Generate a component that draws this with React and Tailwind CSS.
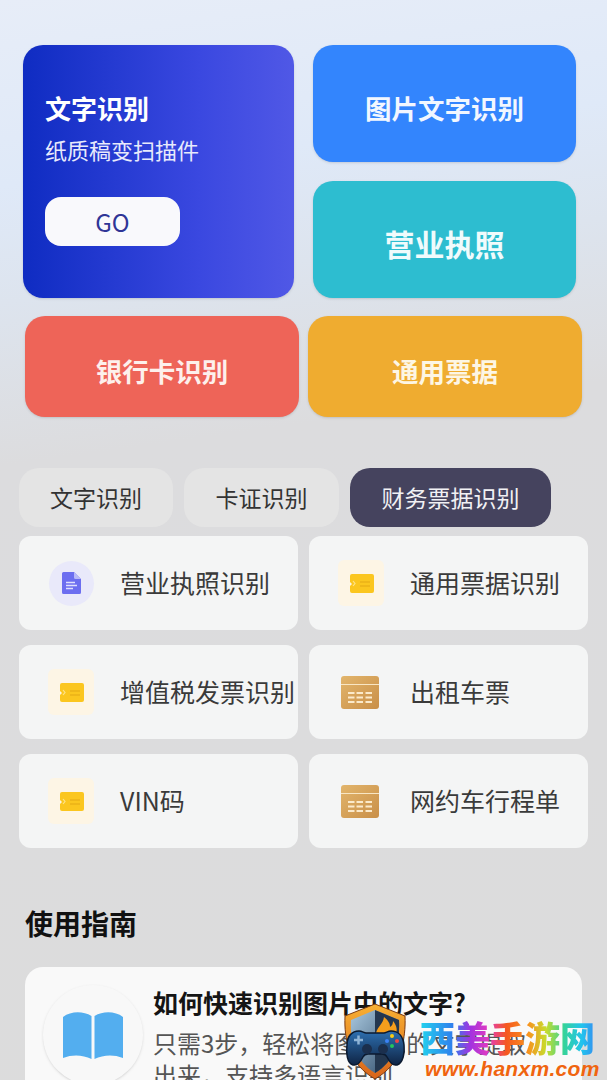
const rows = [
  [
    { label: "营业执照识别", icon: "doc" },
    { label: "通用票据识别", icon: "folder" },
  ],
  [
    { label: "增值税发票识别", icon: "folder" },
    { label: "出租车票", icon: "table" },
  ],
  [
    { label: "VIN码", icon: "folder" },
    { label: "网约车行程单", icon: "table" },
  ],
];

function DocIcon() {
  return (
    <div className="ml-[3px] flex h-[45px] w-[45px] items-center justify-center rounded-full bg-[#e9e9fa]">
      <svg viewBox="0 0 19 22" className="h-[22px] w-[19px]">
        <path d="M1.5 0H12l7 7v13.5a1.5 1.5 0 0 1-1.5 1.5h-16A1.5 1.5 0 0 1 0 20.5V1.5A1.5 1.5 0 0 1 1.5 0z" fill="#6c6ef0" />
        <path d="M12 0l7 7h-5.500A1.500 1.500 0 0 1 12 5.500z" fill="#b9baf8" />
        <path d="M4 10.500h9M4 13.500h11M4 16.500h7" stroke="#dfe0fd" strokeWidth="1.300" />
      </svg>
    </div>
  );
}

function FolderIcon() {
  return (
    <div className="ml-[3px] flex h-[46px] w-[46px] items-center justify-center rounded-md bg-[#fdf5e5]">
      <svg viewBox="0 0 25 19" className="h-[19px] w-[25px]">
        <path d="M3 0h20a2 2 0 0 1 2 2v15a2 2 0 0 1-2 2H3a2 2 0 0 1-2-2v-5l2-2-2-2V2a2 2 0 0 1 2-2z" fill="#fbc61f" />
        <path d="M11 8h10M11 12h10" stroke="#e3a815" strokeWidth="1.200" />
        <path d="M4 7l2 2.500L4 12" fill="none" stroke="#fde48a" strokeWidth="1.200" />
      </svg>
    </div>
  );
}

function TableIcon() {
  return (
    <svg viewBox="0 0 38 33" className="h-[33px] w-[38px]">
      <defs>
        <linearGradient id="tan" x1="0" y1="0" x2="1" y2="1">
          <stop offset="0" stopColor="#e2b56c" />
          <stop offset="1" stopColor="#c98f48" />
        </linearGradient>
      </defs>
      <rect width="38" height="33" rx="3" fill="url(#tan)" />
      <path d="M0 8.500h38" stroke="#f8e6c4" strokeWidth="1.200" />
      <path d="M7 17h6.500M15.500 17h6.500M24.500 17h6.500M7 21.500h6.500M15.500 21.500h6.500M24.500 21.500h6.500M7 26h6.500M15.500 26h6.500M24.500 26h6.500" stroke="#fbeacb" strokeWidth="2" />
    </svg>
  );
}

function RowIcon({ type }) {
  if (type === "doc") return <DocIcon />;
  if (type === "folder") return <FolderIcon />;
  return <TableIcon />;
}

function Watermark() {
  return (
    <div className="absolute bottom-0 left-[342px] flex h-[78px] w-[265px] items-end">
      <svg viewBox="0 0 66 77" className="h-[77px] w-[66px] shrink-0">
        <defs>
          <linearGradient id="rim" x1="0" y1="0" x2="0" y2="1">
            <stop offset="0" stopColor="#f8b133" />
            <stop offset="1" stopColor="#d8641a" />
          </linearGradient>
          <linearGradient id="steel" x1="0" y1="0" x2="1" y2="1">
            <stop offset="0" stopColor="#a9c8de" />
            <stop offset="1" stopColor="#2d4a68" />
          </linearGradient>
          <linearGradient id="pad" x1="0" y1="0" x2="0" y2="1">
            <stop offset="0" stopColor="#2d6fb0" />
            <stop offset="1" stopColor="#0f2444" />
          </linearGradient>
        </defs>
        <path d="M33 1l30 12c1 24-4 48-30 63C7 61 2 37 3 13z" fill="url(#rim)" stroke="#7a3a10" strokeWidth="1" />
        <path d="M33 7l24 10c1 20-3 40-24 53C12 57 8 37 9 17z" fill="url(#steel)" />
        <path d="M33 7l24 10c1 20-3 40-24 53z" fill="#24374f" />
        <path d="M34 30c2-7 7-9 8-16 5 4 6 7 6 10 2-1 3-3 3-6 4 5 5 10 2 14H35z" fill="#f59e1c" />
        <path d="M5 42c0-9 5-14 12-14 3 0 5 2 7 2h18c2 0 4-2 7-2 7 0 12 5 13 14 1 8-1 18-7 20-5 1-8-4-10-8-1-2-3-3-5-3H26c-2 0-4 1-5 3-2 4-5 9-10 8-6-2-7-12-6-20z" fill="url(#pad)" stroke="#0b1a30" strokeWidth="1.500" />
        <path d="M12 37h9M16.500 32.500v9" stroke="#8fb4d6" strokeWidth="2.500" />
        <circle cx="50" cy="33" r="2" fill="#facc15" />
        <circle cx="55" cy="38" r="2" fill="#ef4444" />
        <circle cx="45" cy="38" r="2" fill="#3b82f6" />
        <circle cx="50" cy="43" r="2" fill="#22c55e" />
        <circle cx="25" cy="46" r="5" fill="#1b2f4d" />
        <circle cx="41" cy="46" r="5" fill="#1b2f4d" />
      </svg>
      <div className="ml-[12px] flex flex-col">
        <div className="bg-[linear-gradient(90deg,#22d3ee_0%,#2f80ed_18%,#a233e0_28%,#e23bc0_38%,#f5581f_48%,#f8921e_60%,#c7dc2c_70%,#35d39a_80%,#22c3ee_90%,#3c7bf0_100%)] bg-clip-text text-[35px] leading-[42px] font-black text-transparent">
          西美手游网
        </div>
        <div className="ml-[5px] font-['Liberation_Sans',sans-serif] text-[21px] leading-[22px] font-bold tracking-[0.3px] whitespace-nowrap text-[#f0640f] italic">
          www.hanxm.com
        </div>
      </div>
    </div>
  );
}

export default function App() {
  return (
    <div className="relative h-[1080px] w-[607px] overflow-hidden bg-[linear-gradient(172deg,#e7edf8_0%,#dfe9f8_16%,#dde4ee_26%,#dcdcde_40%,#dcdcdc_100%)] font-['Noto_Sans_CJK_SC','Noto_Sans',sans-serif]">
      <div className="flex gap-[19px] pt-[45px] pl-[23px]">
        <div className="flex h-[253px] w-[271px] flex-col items-start rounded-[20px] bg-[linear-gradient(90deg,#0f2cc2_0%,#3a48e0_65%,#5058e6_100%)] pt-[45px] pl-[22px] shadow-sm">
          <div className="text-[26px] leading-[36px] font-bold text-white">文字识别</div>
          <div className="mt-[7px] text-[22px] leading-[32px] text-[#e8eafc]">纸质稿变扫描件</div>
          <div className="mt-[32px] flex h-[49px] w-[135px] items-center justify-center rounded-[16px] bg-[#f9f9fc] text-[24px] text-[#2f3596]">
            GO
          </div>
        </div>
        <div className="flex w-[263px] flex-col gap-[19px]">
          <div className="flex h-[117px] items-center justify-center rounded-[20px] bg-[#3385fd] pt-[8px] text-[26.5px] font-bold text-[#f2f7ff] shadow-sm">
            图片文字识别
          </div>
          <div className="flex h-[117px] items-center justify-center rounded-[20px] bg-[#2dbdd0] pt-[8px] text-[30px] font-bold text-[#f0fbfc] shadow-sm">
            营业执照
          </div>
        </div>
      </div>

      <div className="mt-[18px] flex gap-[9px] pl-[25px]">
        <div className="flex h-[101px] w-[274px] items-center justify-center rounded-[20px] bg-[#ee6458] pt-[8px] text-[26.5px] font-bold text-[#fdf0ec] shadow-sm">
          银行卡识别
        </div>
        <div className="flex h-[101px] w-[274px] items-center justify-center rounded-[20px] bg-[#efac30] pt-[8px] text-[26.5px] font-bold text-[#fdf6e4] shadow-sm">
          通用票据
        </div>
      </div>

      <div className="mt-[51px] flex gap-[11px] pl-[19px]">
        <div className="flex h-[59px] w-[154px] items-center justify-center rounded-[20px] bg-[#e4e4e4] text-[23px] text-[#333333]">
          文字识别
        </div>
        <div className="flex h-[59px] w-[155px] items-center justify-center rounded-[20px] bg-[#e4e4e4] text-[23px] text-[#333333]">
          卡证识别
        </div>
        <div className="flex h-[59px] w-[201px] items-center justify-center rounded-[20px] bg-[#45435e] text-[23px] text-[#f1f1f4]">
          财务票据识别
        </div>
      </div>

      <div className="mt-[9px] flex flex-col gap-[15px] pl-[19px]">
        {rows.map((row) => (
          <div key={row[0].label} className="flex gap-[11px]">
            {row.map((item) => (
              <div key={item.label} className="flex h-[94px] w-[279px] items-center rounded-[12px] bg-[#f4f5f5]">
                <div className="flex w-[101px] shrink-0 justify-center">
                  <RowIcon type={item.icon} />
                </div>
                <div className="text-[25px] whitespace-nowrap text-[#3a3a3a]">{item.label}</div>
              </div>
            ))}
          </div>
        ))}
      </div>

      <div className="mt-[55px] pl-[25px] text-[28px] leading-[40px] font-bold text-[#111111]">使用指南</div>

      <div className="mt-[24px] ml-[25px] flex h-[160px] w-[557px] gap-[10px] rounded-[18px] bg-[#f9f9f9] pt-[18px] pl-[18px]">
        <div className="flex h-[100px] w-[100px] shrink-0 items-center justify-center rounded-full bg-[#f8f8f8] shadow-sm">
          <svg viewBox="0 0 60 48" className="h-[48px] w-[60px]">
            <path d="M0 6C8 0 20 0 28.5 5v43C20 44 10 43 0 47z" fill="#53aeef" />
            <path d="M60 6C52 0 40 0 31.5 5v43C40 44 50 43 60 47z" fill="#53aeef" />
          </svg>
        </div>
        <div className="min-w-0 flex-1">
          <div className="text-[25px] leading-[34px] font-bold text-[#151515]">如何快速识别图片中的文字?</div>
          <div className="mt-[8px] text-[24px] leading-[32px] whitespace-nowrap text-[#555555]">
            只需3步，轻松将图片中的文字提取
            <br />
            出来，支持多语言识别
          </div>
        </div>
      </div>

      <Watermark />
    </div>
  );
}
